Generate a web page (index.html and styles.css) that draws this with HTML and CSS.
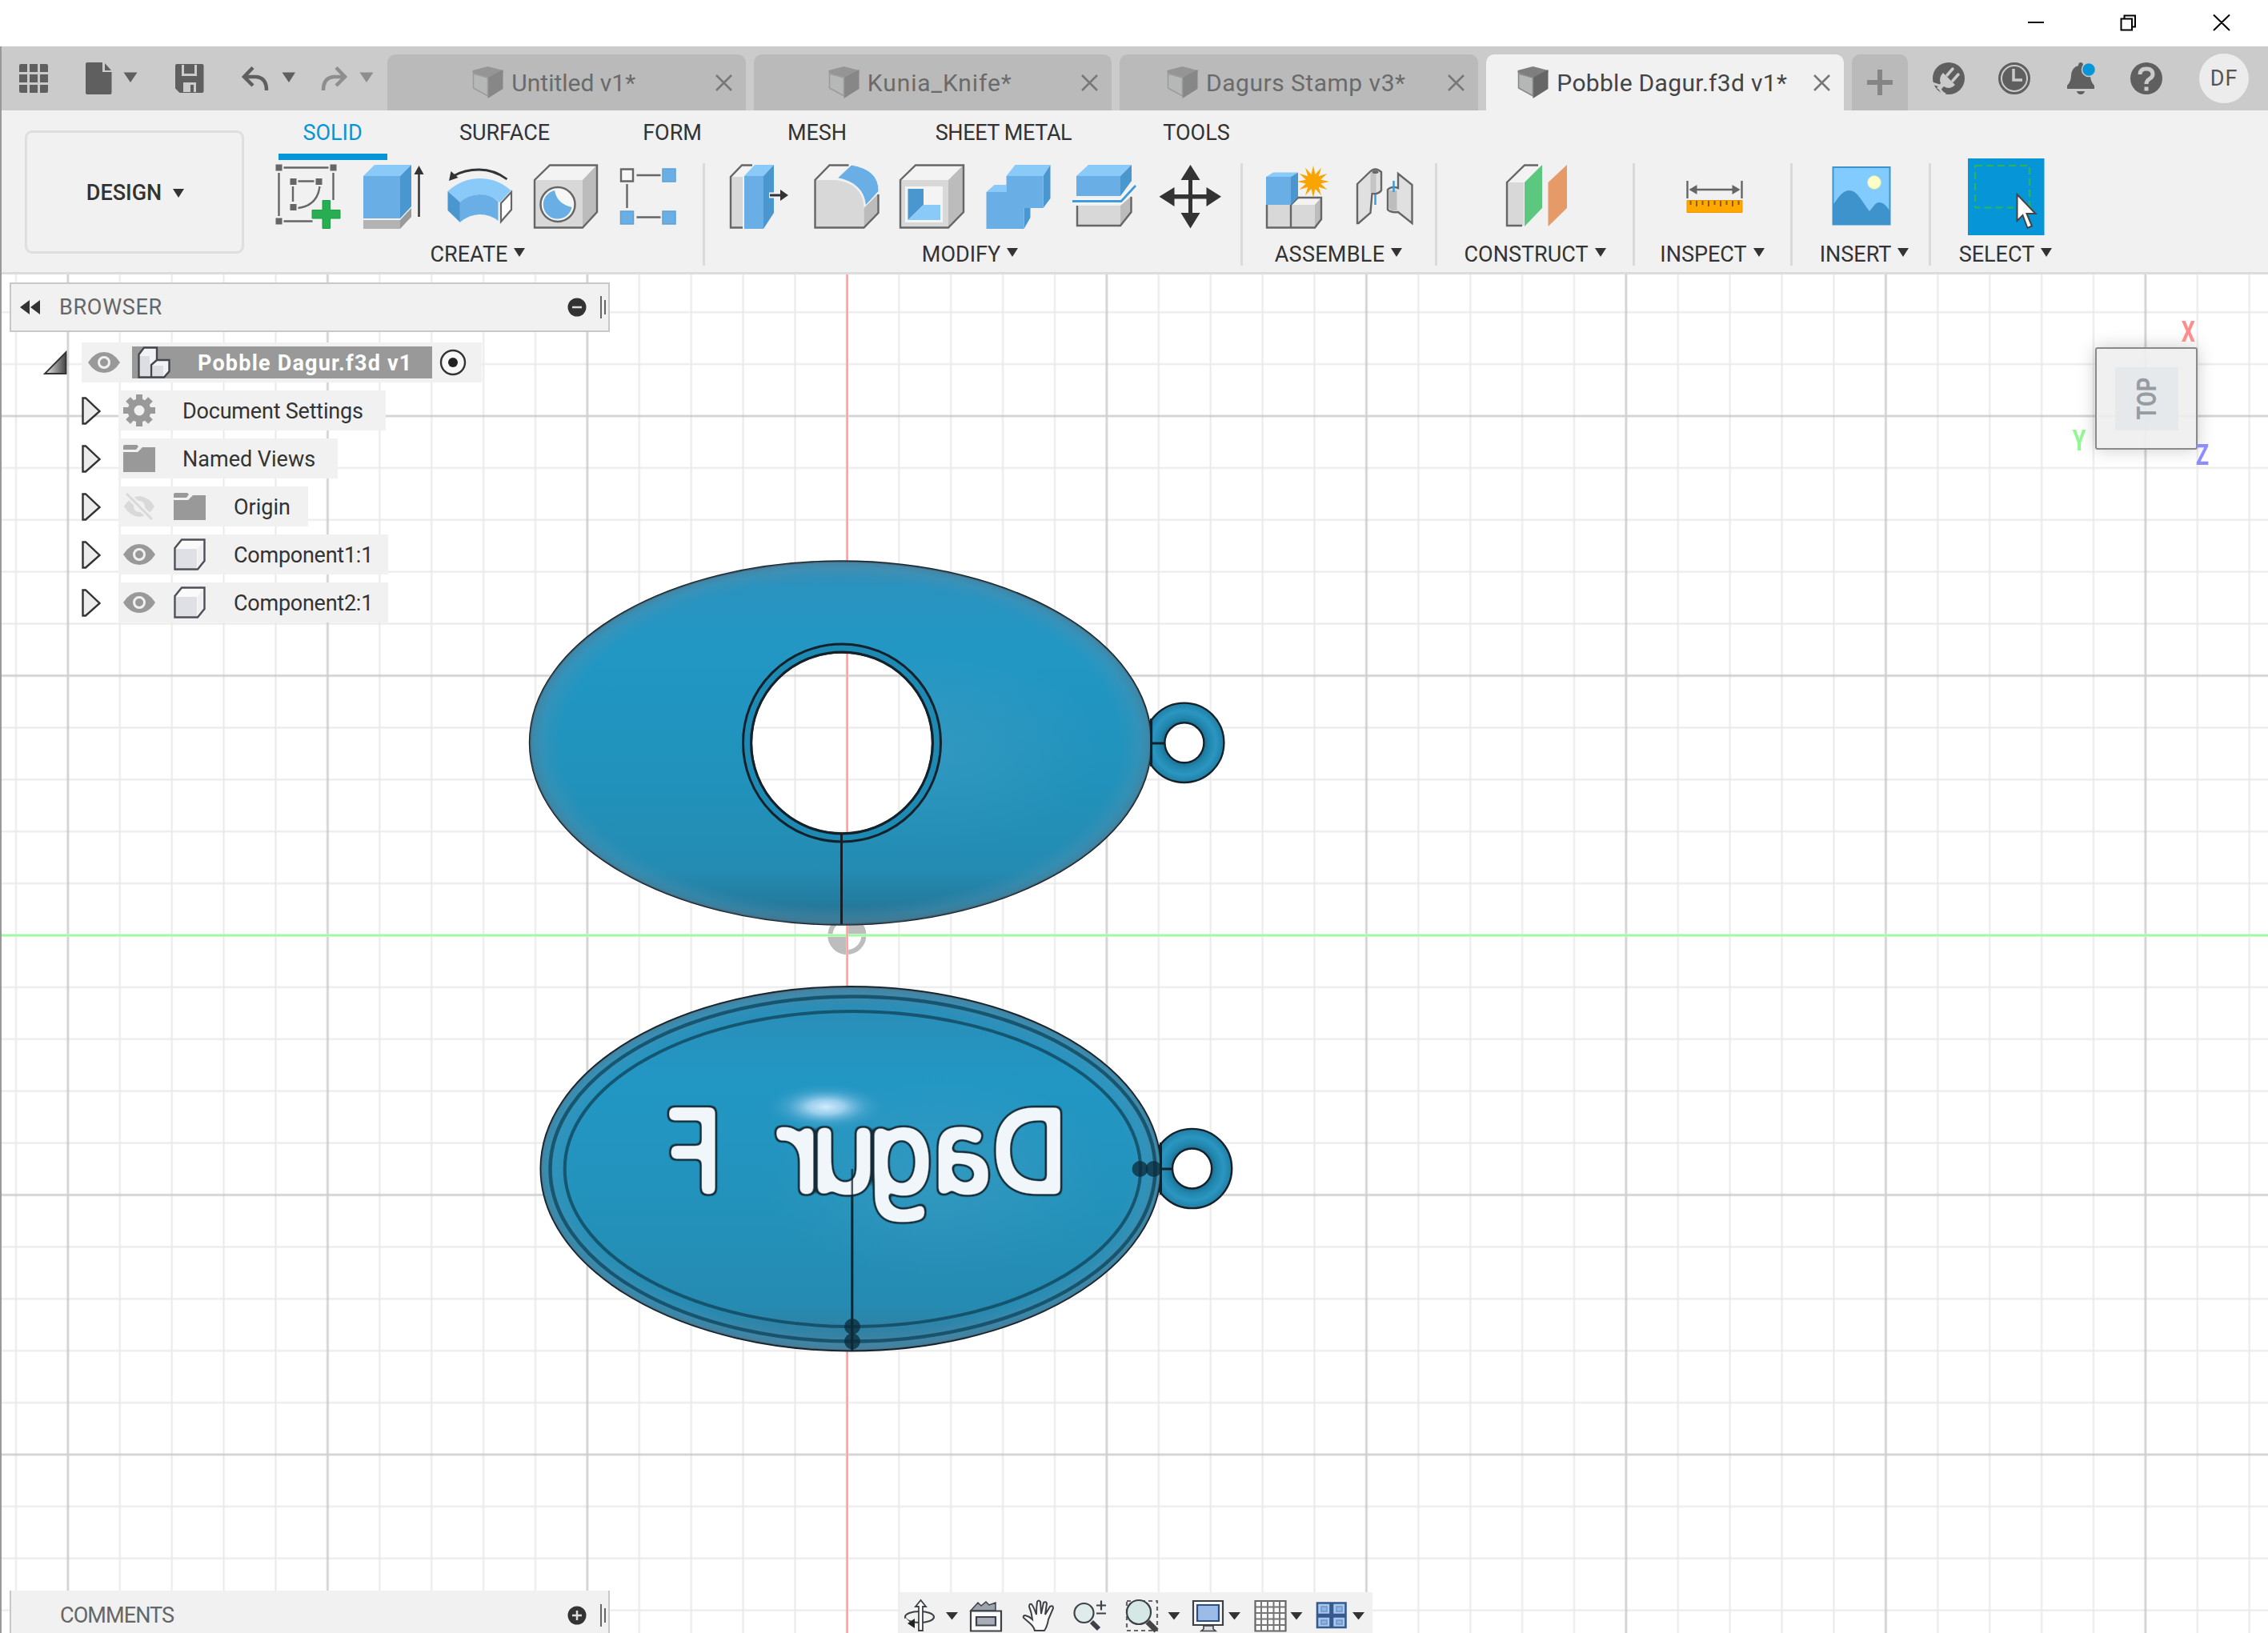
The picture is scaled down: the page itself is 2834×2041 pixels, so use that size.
FILE: index.html
```html
<!DOCTYPE html>
<html lang="en">
<head>
<meta charset="utf-8">
<title>Pobble Dagur.f3d v1</title>
<link rel="stylesheet" href="styles.css">
</head>
<body>
<svg width="0" height="0" class="defs">
  <symbol id="cube" viewBox="0 0 40 40"><path class="c-top" d="M20 0L39 5V8L20 14L1 8V5Z"/><path class="c-right" d="M20 14L39 4V28L20 40Z"/><path class="c-left" d="M2 9L20 14V37L2 27Z"/></symbol>
  <symbol id="eye" viewBox="0 0 40 26"><path fill="#999" d="M0 13Q8 0 20 0T40 13Q32 26 20 26T0 13Z"/><circle cx="20" cy="13" r="6.500" fill="#999" stroke="#f1f1f1" stroke-width="3"/></symbol>
  <symbol id="folder" viewBox="0 0 40 34"><path fill="#999" d="M0 2Q0 0 2 0H17L19 2L16 6H0ZM0 9H18L24 3H40V34H0Z"/></symbol>
  <symbol id="comp" viewBox="0 0 40 40"><path d="M1.500 12L9 1.500H38.500V28L30 38.500H1.500Z" fill="#fafafb"/><path d="M3 13H29V37H3Z" fill="#dfe0e6"/><path d="M30 12L38 3V28L30 37Z" fill="#f0f0f3"/><path d="M1.500 12L10 1.500H38.500V28L30 38.500H1.500Z" fill="none" stroke="#4d4f57" stroke-width="2.400"/></symbol>
  <symbol id="twist" viewBox="0 0 24 35"><path d="M1.500 1.500H5L22.500 18L5 33.500H1.500Z" fill="#ececec" stroke="#333" stroke-width="2.400"/></symbol>
</svg>

<header class="titlebar">
  <svg viewBox="2480 0 354 58" width="354" height="58" fill="none" stroke="#000" stroke-width="2">
    <path d="M2534 28H2554M2650.500 23.500H2664V37.500H2650.500ZM2654.500 23V19.500H2668V33.500H2664M2766 18.500L2786 38M2786 18.500L2766 38"/>
  </svg>
</header>

<div class="app">
<nav class="tabbar">
  <svg class="quick" viewBox="2 58 482 80" width="482" height="80" fill="#5f5f5f">
    <path d="M24 82q0-2 2-2h8v10H24ZM37 80h10v10H37ZM50 80h8q2 0 2 2v8H50ZM24 93h10v10H24ZM37 93h10v10H37ZM50 93h10v10H50ZM24 106h10v10h-8q-2 0-2-2ZM37 106h10v10H37ZM50 106h10v8q0 2-2 2h-8Z"/>
    <path d="M107 80q0-2 2-2h19v12h11.500v26q0 2-2 2h-28.500q-2 0-2-2ZM131 79L139 88H131Z"/>
    <path d="M154.500 90.500H171.500L163 103Z"/>
    <path fill-rule="evenodd" d="M219 82q0-2 2-2h31.500q2 0 2 2v32q0 2-2 2h-28l-5.500-5.500ZM227 81v14h19V81h-3v11h-13V81ZM229 115v-12h16v12h-3v-9h-4v9Z"/>
    <g fill="none" stroke="#5f5f5f" stroke-width="4.500"><path d="M316 84.500L305 96L316 107M306 96H320Q333 97 333 113"/></g>
    <path d="M352.500 90.500H369L361 103Z"/>
    <g fill="none" stroke="#8e8e8e" stroke-width="4.500"><path d="M420 84.500L431 96L420 107M430 96H417Q404 97 404 113"/></g>
    <path fill="#8e8e8e" d="M449.500 90.500H466.500L458 103Z"/>
  </svg>
  <div class="tabs">
    <div class="tab"><div class="tab-title"><svg class="cube dim" width="41" height="40"><use href="#cube"/></svg><span class="t1">Untitled v1*</span></div><svg class="x" width="21" height="21" viewBox="0 0 21 21"><path d="M1 1L20 20M20 1L1 20"/></svg></div>
    <div class="tab"><div class="tab-title"><svg class="cube dim" width="41" height="40"><use href="#cube"/></svg><span class="t2">Kunia_Knife*</span></div><svg class="x" width="21" height="21" viewBox="0 0 21 21"><path d="M1 1L20 20M20 1L1 20"/></svg></div>
    <div class="tab"><div class="tab-title"><svg class="cube dim" width="41" height="40"><use href="#cube"/></svg><span class="t3">Dagurs Stamp v3*</span></div><svg class="x" width="21" height="21" viewBox="0 0 21 21"><path d="M1 1L20 20M20 1L1 20"/></svg></div>
    <div class="tab active"><div class="tab-title"><svg class="cube" width="41" height="40"><use href="#cube"/></svg><span class="t4">Pobble Dagur.f3d v1*</span></div><svg class="x" width="21" height="21" viewBox="0 0 21 21"><path d="M1 1L20 20M20 1L1 20"/></svg></div>
    <div class="newtab"><svg width="34" height="34" viewBox="0 0 34 34"><path d="M17 1V33M1 17H33" stroke="#858585" stroke-width="6"/></svg></div>
  </div>
  <svg viewBox="2385 58 363 80" width="363" height="80" fill="#5f5f5f">
    <circle cx="2435" cy="98" r="20"/>
    <path fill="none" stroke="#cbcbcb" stroke-width="3" d="M2414 104L2424 107Q2423 114 2431 118"/>
    <path fill="#cbcbcb" d="M2428 91L2443 106Q2436 113 2429 108L2424 113L2420 110L2425 104Q2422 97 2428 91Z"/>
    <path fill="none" stroke="#cbcbcb" stroke-width="3.500" stroke-linecap="round" d="M2433 94L2440 86M2440 101L2447 93"/>
    <circle cx="2517" cy="98" r="18.500" fill="none" stroke="#5f5f5f" stroke-width="3"/><circle cx="2517" cy="98" r="15"/>
    <path fill="none" stroke="#cbcbcb" stroke-width="3.500" d="M2516 86V100H2527"/>
    <path d="M2583 111V107Q2588 102 2588 94Q2589 84 2597 82Q2597 78 2600 78T2603 82Q2611 84 2612 94Q2612 102 2617 107V111ZM2595 114H2605Q2604 118 2600 118T2595 114Z"/>
    <circle cx="2610" cy="87" r="8.500" fill="#0696d7" stroke="#cbcbcb" stroke-width="1.500"/>
    <circle cx="2682" cy="98" r="20"/>
    <path fill="none" stroke="#cbcbcb" stroke-width="5" d="M2674 93Q2674 86 2682 86T2690 93Q2690 96 2686 98.500T2682 105M2682 108.500V113.500"/>
  </svg>
  <div class="avatar">DF</div>
</nav>

<section class="ribbon">
  <button class="design"><span>DESIGN</span><i class="caret"></i></button>
  <div class="ribbon-main">
    <div class="ribbon-tabs"><span class="on">SOLID</span><span>SURFACE</span><span>FORM</span><span>MESH</span><span class="sm">SHEET METAL</span><span>TOOLS</span></div>
    <div class="groups">
      <div class="group g1">
        <div class="tools">
          <svg viewBox="330.500 198 107.500 96" width="107.500" height="96">
            <path class="ln" d="M354 209.500H410M348 216V270M416 216V250M354 276.500H390M372 226.500H392M365.500 233V252M399 233Q396 257 372 260"/>
            <path fill="#666" d="M344 205.500h8v8h-8ZM412 205.500h8v8h-8ZM344 272.500h8v8h-8ZM362 223h8v8h-8ZM394 223h8v8h-8ZM362 255h8v8h-8Z"/>
            <path fill="#27ae53" stroke="#1e9e48" d="M402.500 250.500H412V262.500H424.500V273H412V285.500H402.500V273H389.500V262.500H402.500Z"/>
          </svg>
          <svg viewBox="438 198 107.500 96" width="107.500" height="96">
            <path class="bf" d="M454 220H500V273H454Z"/><path class="bt" d="M454 220L468 206H514L500 220Z"/><path class="bs" d="M500 220L514 206V258L500 273Z"/>
            <path fill="#b3b3b3" d="M454 275H500V286H454Z"/><path fill="#9a9a9a" d="M500 275L514 260V271L500 286Z"/>
            <path stroke="#333" stroke-width="2.500" d="M523.500 216V271"/><path fill="#333" d="M523.500 207L529.500 218H517.500Z"/>
          </svg>
          <svg viewBox="545.500 198 107.500 96" width="107.500" height="96">
            <path class="bt" d="M559 239Q577 223 599 223T638 238L624 253Q612 243 599 243T574 253Z"/><path class="bs" d="M559 239L574.500 253V278L559 263Z"/><path class="bf" d="M574 253Q585 243 599 243T622 252V276Q612 268 599 268T574 278Z"/>
            <path d="M625.500 254L638.500 240V262L625.500 277Z" fill="#fff" stroke="#666" stroke-width="2.200"/>
            <path fill="none" stroke="#333" stroke-width="2.800" d="M633 224Q617 212 598 212Q580 212 566 220"/><path fill="#333" d="M560.500 226L563 214L572 222Z"/>
          </svg>
          <svg viewBox="653 198 107.500 96" width="107.500" height="96">
            <path class="gf" d="M668 225H728V285H668Z"/><path class="gt" d="M668 225L687 206H746L728 225Z"/><path class="gs" d="M728 225L746 206V265L728 285Z"/><path class="ln" d="M668 225L687 206.500H746V265L728 284.500H668Z"/>
            <circle cx="697" cy="255.500" r="21.500" fill="#f6f6f6" stroke="#666" stroke-width="2.500"/><path class="bf" d="M693 238A18 18 0 1 0 714.500 259Q696 255 693 238Z"/>
          </svg>
          <svg viewBox="760.500 198 107.500 96" width="107.500" height="96">
            <path class="ln" d="M795 219H825M783 230V260M795 271.500H825"/><path d="M775.500 211.500h15v15h-15Z" fill="#f6f6f6" stroke="#666" stroke-width="2.400"/>
            <path fill="#69afe5" stroke="#5fa1d4" stroke-width="1.500" d="M827.500 211h16v16h-16ZM775 264h16v16h-16ZM827.500 264h16v16h-16Z"/>
          </svg>
        </div>
        <div class="label">CREATE<i class="caret"></i></div>
      </div>
      <div class="group g2">
        <div class="tools">
          <svg viewBox="895 198 107.500 96" width="107.500" height="96">
            <path class="gt" d="M913 221L928 206H940L929 221Z"/><path class="gf" d="M913 221H928V285H913Z"/><path class="ln" d="M940 206.500H927L913 221V284.500H928"/>
            <path class="bf" d="M930 220H954V286H930Z"/><path class="bt" d="M930 220L943 206H967L954 220Z"/><path class="bs" d="M954 220L967 206V266L954 286Z"/>
            <path stroke="#f1f1f1" stroke-width="7" d="M961 244H976"/><path stroke="#333" stroke-width="3" d="M962 244H977"/><path fill="#333" d="M975 237L985 244L975 251Z"/>
          </svg>
          <svg viewBox="1002.500 198 107.500 96" width="107.500" height="96">
            <path class="gt" d="M1018 225L1036 206H1062L1044 225Z"/><path class="gf" d="M1018 225H1044Q1078 230 1079 259V285H1018Z"/><path class="gs" d="M1079 260L1097 242V266L1079 285Z"/>
            <path class="ln" d="M1060 206.500H1036L1018 225V284.500H1079L1097 266V243"/><path class="bf" stroke="#f1f1f1" stroke-width="1" d="M1046 222.500L1063.500 206Q1098 212 1097.500 239L1081 257Q1079 229 1046 222.500Z"/>
          </svg>
          <svg viewBox="1110 198 107.500 96" width="107.500" height="96">
            <path class="gf" d="M1125 225H1185V285H1125Z"/><path class="gt" d="M1125 225L1144 206H1204L1185 225Z"/><path class="gs" d="M1185 225L1204 206V265L1185 285Z"/><path class="ln" d="M1125 225L1144 206.500H1204V265L1185 284.500H1125Z"/>
            <path fill="#f4f4f4" d="M1131 233H1178V278H1131Z"/><path class="bs" d="M1134.500 236H1154V256L1134.500 275Z"/><path class="bt" d="M1154 256H1175V275H1134.500Z"/>
          </svg>
          <svg viewBox="1217.500 198 107.500 96" width="107.500" height="96">
            <path class="bt" d="M1257 220L1268 206H1312L1303 220ZM1232 240L1242 231H1257V240Z"/><path class="bs" d="M1303 220L1312 206V248L1303 260ZM1279 260H1287V272L1279 286Z"/><path class="bf" d="M1232 240H1257V220H1303V260H1279V286H1232Z"/>
          </svg>
          <svg viewBox="1325 198 107.500 96" width="107.500" height="96">
            <path class="bf" d="M1345 220H1400V245H1345Z"/><path class="bt" d="M1345 220L1360 206H1414L1400 220Z"/><path class="bs" d="M1400 220L1414 206V226L1400 245Z"/>
            <path class="gf" d="M1345 257H1400V282H1345Z"/><path class="gs" d="M1400 257L1414 245V265L1400 282Z"/><path class="ln" d="M1346 257V282H1400L1413.500 265V246"/>
            <path fill="none" stroke="#f8f8f8" stroke-width="6" d="M1340 251.500H1401L1419 232"/><path fill="none" stroke="#3d9be0" stroke-width="2.800" d="M1340 251.500H1401L1419 232"/>
          </svg>
          <svg viewBox="1432.500 198 107.500 96" width="107.500" height="96">
            <path fill="#333" d="M1487 206L1499 225H1489.500V243H1507V234L1525.500 245.700L1507 258V248.500H1489.500V266H1499L1487 285.500L1475 266H1484.500V248.500H1467V258L1448 245.700L1467 234V243H1484.500V225H1475Z"/>
          </svg>
        </div>
        <div class="label">MODIFY<i class="caret"></i></div>
      </div>
      <div class="group g3">
        <div class="tools">
          <svg viewBox="1568 198 107.500 96" width="107.500" height="96">
            <path class="gf" d="M1582 256H1643V285H1582Z"/><path class="gt" d="M1613 256L1622 247H1651L1643 256Z"/><path class="gs" d="M1643 256L1651 247V274L1643 285Z"/><path class="ln" d="M1583 256V284.500H1643L1651 274V247H1622L1613 256V284"/>
            <path class="bf" d="M1582 221H1613V256H1582Z"/><path class="bt" d="M1582 221L1591 215.500H1622L1613 221Z"/><path class="bs" d="M1613 221L1622 215.500V246L1613 256Z"/>
            <g transform="translate(1641 227)" fill="#f9a400"><circle r="15" fill="#f1f1f1"/><circle r="9.500"/><path id="ray" d="M0-20L4.500 0L0 20L-4.500 0Z"/><use href="#ray" transform="rotate(30)"/><use href="#ray" transform="rotate(60)"/><use href="#ray" transform="rotate(90)"/><use href="#ray" transform="rotate(120)"/><use href="#ray" transform="rotate(150)"/></g>
          </svg>
          <svg viewBox="1675.500 198 107.500 96" width="107.500" height="96">
            <path d="M1695.500 230L1711 215Q1718 208 1725.500 215V238Q1722 243 1714 242L1712 266L1697 279H1695.500Z" fill="#e0e0e0" stroke="#666" stroke-width="2.400"/><path fill="#c4c4c4" d="M1712 216V240Q1717 242 1719 240V217Z"/><ellipse cx="1718" cy="215" rx="4" ry="2" fill="#666"/>
            <path d="M1746.500 217L1764 231V279L1746.500 265Q1737 266 1733.500 262V237Q1738 232 1746.500 235Z" fill="#e0e0e0" stroke="#666" stroke-width="2.400"/><path fill="#bdbdbd" d="M1735 238H1745V263H1738L1735 260Z"/><path stroke="#3d9be0" stroke-width="2.500" d="M1718 243V256M1741 226V240"/>
          </svg>
        </div>
        <div class="label">ASSEMBLE<i class="caret"></i></div>
      </div>
      <div class="group g4">
        <div class="tools">
          <svg viewBox="1865 198 107.500 96" width="107.500" height="96">
            <path class="gt" d="M1883 228L1905 206H1926L1904 228Z"/><path class="gf" d="M1883 228H1904V282H1883Z"/><path class="ln" d="M1922 206.500H1905L1883 228V282H1902"/>
            <path fill="#5cc77f" d="M1905 228L1927 206V260L1905 283Z"/><path fill="#e59a68" d="M1934.500 228L1958 206V260L1934.500 283Z"/>
          </svg>
        </div>
        <div class="label">CONSTRUCT<i class="caret"></i></div>
      </div>
      <div class="group g5">
        <div class="tools">
          <svg viewBox="2088.500 198 107.500 96" width="107.500" height="96">
            <path class="ln" d="M2108 226V248M2176 226V248M2112 237H2172"/><path fill="#666" d="M2110 237L2120 231V243ZM2174 237L2164 231V243Z"/>
            <path fill="#ffa800" stroke="#e89600" d="M2107.500 250.500H2176.500V265.500H2107.500Z"/><path stroke="#8a5c00" stroke-width="2" d="M2112 251V256M2119.500 251V258M2127 251V256M2134.500 251V258M2142 251V256M2149.500 251V258M2157 251V256M2164.500 251V258M2172 251V256"/>
          </svg>
        </div>
        <div class="label">INSPECT<i class="caret"></i></div>
      </div>
      <div class="group g6">
        <div class="tools">
          <svg viewBox="2272 198 107.500 96" width="107.500" height="96">
            <path fill="#82cbff" d="M2290 208.500H2362V281H2290Z"/><path fill="#3f93cc" d="M2290 257C2298 245 2303 238 2311 238C2321 238 2328 254 2336 264C2341 259 2343 253 2348 253C2354 253 2358 258 2362 265V281H2290Z"/>
            <circle cx="2342" cy="228" r="8.500" fill="#ffffc8" stroke="#bfe0c8"/><path fill="none" stroke="#3f93cc" stroke-width="2" d="M2290.500 209H2361.500V280.500H2290.500Z"/>
          </svg>
        </div>
        <div class="label">INSERT<i class="caret"></i></div>
      </div>
      <div class="group g7">
        <div class="tools">
          <svg viewBox="2453 198 107.500 96" width="107.500" height="96">
            <path fill="#0696d7" d="M2459 198H2554.500V294H2459Z"/><path fill="none" stroke="#2cb45a" stroke-width="2.200" stroke-dasharray="9 5" d="M2468 207H2536V259.500H2468Z"/>
            <path fill="#fff" stroke="#444" stroke-width="2" d="M2520.500 243V276L2527.500 269L2533.500 285L2539 282.500L2532.500 267H2543.500Z"/>
          </svg>
        </div>
        <div class="label">SELECT<i class="caret"></i></div>
      </div>
    </div>
  </div>
</section>

<main class="viewport">
  <svg class="scene" viewBox="2 343 2832 1698" width="2832" height="1698">
    <defs>
      <pattern id="minor" patternUnits="userSpaceOnUse" x="1056.900" y="1167.500" width="64.900" height="64.900"><path d="M1.500 0V64.900M0 1.500H64.900" stroke="#000" stroke-opacity=".085" stroke-width="2"/></pattern>
      <pattern id="major" patternUnits="userSpaceOnUse" x="1056.400" y="1167" width="324.500" height="324.500"><path d="M2 0V324.500M0 2H324.500" stroke="#000" stroke-opacity=".11" stroke-width="3"/></pattern>
      <linearGradient id="body" x1="0" y1="0" x2="0" y2="1"><stop offset="0" stop-color="#3b8cb2"/><stop offset=".07" stop-color="#2a93bf"/><stop offset=".25" stop-color="#2297c4"/><stop offset=".6" stop-color="#2092bb"/><stop offset=".85" stop-color="#258bb2"/><stop offset=".94" stop-color="#237c9f"/><stop offset="1" stop-color="#316b84"/></linearGradient>
      <linearGradient id="body2" x1="0" y1="0" x2="0" y2="1"><stop offset="0" stop-color="#3d83a4"/><stop offset=".06" stop-color="#2a8eb8"/><stop offset=".25" stop-color="#2297c4"/><stop offset=".6" stop-color="#2292bb"/><stop offset=".88" stop-color="#268ab1"/><stop offset="1" stop-color="#3a7b9a"/></linearGradient>
      <radialGradient id="sheen" cx=".64" cy=".52" r=".28"><stop offset="0" stop-color="#5aa3c6" stop-opacity=".3"/><stop offset=".5" stop-color="#5aa3c6" stop-opacity=".16"/><stop offset="1" stop-color="#5aa3c6" stop-opacity="0"/></radialGradient>
      <radialGradient id="rim"><stop offset=".9" stop-color="#4a90b2" stop-opacity="0"/><stop offset=".96" stop-color="#4a90b2" stop-opacity=".4"/><stop offset="1" stop-color="#507c92" stop-opacity=".65"/></radialGradient>
      <radialGradient id="torus"><stop offset=".5" stop-color="#1d6f90"/><stop offset=".62" stop-color="#2086ad"/><stop offset=".8" stop-color="#2b96c1"/><stop offset="1" stop-color="#1f7fa5"/></radialGradient>
      <radialGradient id="spot"><stop offset="0" stop-color="#d3ecff"/><stop offset=".3" stop-color="#aed8f4" stop-opacity=".85"/><stop offset=".65" stop-color="#6db5dc" stop-opacity=".35"/><stop offset="1" stop-color="#2f98c5" stop-opacity="0"/></radialGradient>
      <filter id="emboss" color-interpolation-filters="sRGB" x="-10%" y="-20%" width="120%" height="150%">
        <feMorphology in="SourceAlpha" operator="dilate" radius="2" result="fat"/>
        <feGaussianBlur in="fat" stdDeviation="3.500" result="soft"/>
        <feComponentTransfer in="soft" result="shape"><feFuncA type="linear" slope="7" intercept="-2.700"/></feComponentTransfer>
        <feComponentTransfer in="soft" result="outer"><feFuncA type="linear" slope="7" intercept="-1"/></feComponentTransfer>
        <feFlood flood-color="#142c38"/><feComposite in2="outer" operator="in" result="edge"/>
        <feFlood flood-color="#f0f6fa"/><feComposite in2="shape" operator="in" result="fill"/>
        <feMerge><feMergeNode in="edge"/><feMergeNode in="fill"/></feMerge>
      </filter>
    </defs>
    <rect x="2" y="343" width="2832" height="1698" fill="url(#minor)"/>
    <rect x="2" y="343" width="2832" height="1698" fill="url(#major)"/>
    <g fill="none"><circle cx="1058.400" cy="1169" r="21" stroke="#bdbdbd" stroke-width="6"/><path fill="#bdbdbd" d="M1058.400 1169V1193A24 24 0 0 1 1034.400 1169ZM1058.400 1169V1145A24 24 0 0 1 1082.400 1169Z"/></g>
    <path d="M2 1169H2834" stroke="#fff" stroke-width="3.500"/><path d="M2 1169H2834" stroke="#a4f7a4" stroke-width="3"/>
    <path d="M1058.500 343V2041" stroke="#fff" stroke-width="3"/><path d="M1058.500 343V2041" stroke="#ff8a8a" stroke-width="2"/>

    <g stroke="#15212a" stroke-width="2.400">
      <path fill="url(#torus)" fill-rule="evenodd" d="M1430 928.300A49.700 49.700 0 1 0 1529.400 928.300A49.700 49.700 0 1 0 1430 928.300ZM1455.400 928.300A24.500 25 0 1 0 1504.400 928.300A24.500 25 0 1 0 1455.400 928.300Z"/>
      <path d="M1438 929H1455" stroke-width="3"/>
      <path fill="url(#body)" fill-rule="evenodd" d="M662 928.300C662 802 836 701.500 1050.500 701.500S1438.500 802 1438.500 928.300S1265 1155.500 1050.500 1155.500S662 1054 662 928.300ZM939 928.500A113 113 0 1 0 1165 928.500A113 113 0 1 0 939 928.500Z"/>
      <path stroke="none" fill="url(#sheen)" fill-rule="evenodd" d="M662 928.300C662 802 836 701.500 1050.500 701.500S1438.500 802 1438.500 928.300S1265 1155.500 1050.500 1155.500S662 1054 662 928.300ZM939 928.500A113 113 0 1 0 1165 928.500A113 113 0 1 0 939 928.500Z"/>
      <path stroke="none" fill="url(#rim)" fill-rule="evenodd" d="M662 928.300C662 802 836 701.500 1050.500 701.500S1438.500 802 1438.500 928.300S1265 1155.500 1050.500 1155.500S662 1054 662 928.300ZM939 928.500A113 113 0 1 0 1165 928.500A113 113 0 1 0 939 928.500Z"/>
      <circle cx="1052" cy="928.500" r="118.500" fill="none" stroke="#1d8ab3" stroke-width="9"/>
      <circle cx="1052" cy="928.500" r="123.500" fill="none" stroke-width="3"/><circle cx="1052" cy="928.500" r="113.500" fill="none" stroke-width="3"/>
      <path d="M1051.500 1042V1155" stroke-width="3"/><path d="M1438.600 898V958" stroke-width="3"/>
    </g>

    <g stroke="#15212a" stroke-width="2.400">
      <path fill="url(#torus)" fill-rule="evenodd" d="M1440 1460.500A49.600 49.600 0 1 0 1539.200 1460.500A49.600 49.600 0 1 0 1440 1460.500ZM1465 1460.500A24.600 25 0 1 0 1514.200 1460.500A24.600 25 0 1 0 1465 1460.500Z"/>
      <path d="M1450 1461H1465" stroke-width="3"/>
      <ellipse cx="1063" cy="1460.700" rx="387.300" ry="227.500" fill="url(#body2)"/>
      <ellipse cx="1063" cy="1460.700" rx="387" ry="227" fill="url(#sheen)" stroke="none"/>
      <ellipse cx="1063" cy="1460.700" rx="387" ry="227" fill="url(#rim)" stroke="none"/>
      <ellipse cx="1065.500" cy="1461" rx="378" ry="215.500" fill="none" stroke="#0f4257" stroke-opacity=".75" stroke-width="4.500"/>
      <ellipse cx="1065.400" cy="1461" rx="359.700" ry="197" fill="none" stroke="#0f4257" stroke-opacity=".75" stroke-width="4"/>
      <ellipse cx="1032" cy="1383.500" rx="76" ry="30" fill="url(#spot)" stroke="none"/>
      <path d="M1450.500 1428V1493" stroke-width="3"/>
    </g>
    <g filter="url(#emboss)"><g class="engraving" transform="translate(1326.500 1490) scale(-.88 .96)"><text x="-10 100 183 263 343 410 480" y="0">Dagur F</text></g></g>
    <path d="M1064.800 1494V1689" stroke="#10242e" stroke-width="3"/><path d="M1064.800 1461V1494" stroke="#10242e" stroke-width="2.500" stroke-opacity=".75"/>
    <g fill="#0b2a38" fill-opacity=".75"><circle cx="1065" cy="1658" r="10"/><circle cx="1065" cy="1676.500" r="10"/><circle cx="1424.500" cy="1461" r="10"/><circle cx="1441.500" cy="1461" r="10"/></g>
  </svg>

  <div class="viewcube">
    <div class="cube-face"><div class="cube-mid"><span>TOP</span></div></div>
    <b class="ax x-ax">X</b><b class="ax y-ax">Y</b><b class="ax z-ax">Z</b>
  </div>

  <aside class="browser">
    <div class="panel-head">
      <svg width="26" height="18" viewBox="0 0 26 18"><path fill="#333" d="M12 0V18L0 9ZM25 0V18L13 9Z"/></svg>
      <span class="panel-name b">BROWSER</span>
      <svg class="grip" width="48" height="30" viewBox="0 0 48 30"><circle cx="12" cy="15" r="11.500" fill="#333"/><path d="M6 15H18" stroke="#ddd" stroke-width="2.500"/><path d="M42 1V29M47 6V24" stroke="#666" stroke-width="2"/></svg>
    </div>
    <div class="tree">
      <div class="row root"><svg class="tw" width="30" height="30" viewBox="0 0 30 30"><defs><linearGradient id="tg"><stop offset="0" stop-color="#eee"/><stop offset="1" stop-color="#444"/></linearGradient></defs><path d="M2 29H28.500V2Z" fill="url(#tg)" stroke="#333" stroke-width="1.800"/></svg>
        <div class="item"><svg class="eye" width="40" height="26"><use href="#eye"/></svg>
          <div class="sel"><svg width="41" height="40" viewBox="0 0 41 40"><path d="M1.500 10L8 1.500H23V17H40V30L33 38.500H1.500Z" fill="#f3f3f6"/><path d="M3 12H15V37H3ZM18 24H32V37H18Z" fill="#dcdee4"/><path d="M1.500 10L8 1.500H24V17H39.500V31L33 38.500H1.500ZM17 38V23L24 17" fill="none" stroke="#44464e" stroke-width="2.400"/></svg><span>Pobble Dagur.f3d v1</span></div>
          <svg width="34" height="34" viewBox="0 0 34 34"><circle cx="17" cy="17" r="15" fill="#f8f8f8" stroke="#333" stroke-width="2.400"/><circle cx="17" cy="17" r="6" fill="#222"/></svg></div></div>
      <div class="row"><svg class="tw" width="24" height="35"><use href="#twist"/></svg><div class="item w2"><svg width="40" height="40" viewBox="-20 -20 40 40"><circle r="10.500" fill="none" stroke="#999" stroke-width="8"/><path d="M0-20V-12M0 20V12M-20 0H-12M20 0H12M-14-14L-9-9M14 14L9 9M-14 14L-9 9M14-14L9-9" stroke="#999" stroke-width="8"/></svg><span class="n2">Document Settings</span></div></div>
      <div class="row"><svg class="tw" width="24" height="35"><use href="#twist"/></svg><div class="item w3"><svg width="40" height="34"><use href="#folder"/></svg><span class="n3">Named Views</span></div></div>
      <div class="row"><svg class="tw" width="24" height="35"><use href="#twist"/></svg><div class="item w4"><svg width="40" height="34" viewBox="0 0 40 34"><path fill="#d9d9d9" d="M1 17Q8 5 20 4Q32 5 39 17Q32 29 20 30Q8 29 1 17Z"/><circle cx="20" cy="17" r="7" fill="#f1f1f1"/><path d="M3 0L37 34" stroke="#f1f1f1" stroke-width="8"/><path d="M4 1L36 33" stroke="#d9d9d9" stroke-width="3"/></svg><svg class="second" width="40" height="34"><use href="#folder"/></svg><span class="n4">Origin</span></div></div>
      <div class="row"><svg class="tw" width="24" height="35"><use href="#twist"/></svg><div class="item w5"><svg width="40" height="26"><use href="#eye"/></svg><svg class="second" width="40" height="40"><use href="#comp"/></svg><span class="n5">Component1:1</span></div></div>
      <div class="row"><svg class="tw" width="24" height="35"><use href="#twist"/></svg><div class="item w5"><svg width="40" height="26"><use href="#eye"/></svg><svg class="second" width="40" height="40"><use href="#comp"/></svg><span class="n5">Component2:1</span></div></div>
    </div>
  </aside>

  <div class="comments"><span class="panel-name c">COMMENTS</span><svg class="grip" width="48" height="30" viewBox="0 0 48 30"><circle cx="12" cy="15" r="11.500" fill="#333"/><path d="M6 15H18M12 9V21" stroke="#ddd" stroke-width="2.500"/><path d="M42 1V29M47 6V24" stroke="#666" stroke-width="2"/></svg></div>

  <div class="navbar">
    <svg viewBox="1124 1990 591 51" width="591" height="51" fill="none" stroke="#3d4248" stroke-width="2.200">
      <ellipse cx="1149" cy="2021" rx="18" ry="7"/><path stroke="#f1f1f1" stroke-width="5" d="M1130 2024L1136 2030"/><path fill="#fff" stroke-width="1.800" d="M1148 2038V2008H1144L1150.500 2000L1157 2008H1153V2038Z"/><path fill="#222" stroke="none" d="M1134 2029L1143 2023V2035Z"/>
      <path fill="#9ea3ab" d="M1213 2013L1222 2003L1226 2007L1232 2002L1236 2006L1244 2003V2013Z" stroke-width="1.500"/><path fill="#fafafa" d="M1213 2013.500H1251V2038.500H1213Z"/><path fill="#a9adb8" d="M1220 2021H1244V2031.500H1220Z"/>
      <path fill="#fafafa" stroke-width="2" d="M1293 2038Q1292 2033 1286 2028L1279 2022Q1278 2019 1281 2019Q1286 2020 1290 2024Q1289 2015 1286 2008Q1286 2004 1289 2005Q1292 2009 1295 2018Q1295 2009 1296 2002Q1298 1999 1300 2002L1301 2017L1304 2003Q1307 2001 1308 2004L1306 2018L1312 2008Q1316 2006 1316 2010L1310 2024Q1309 2032 1305 2038Z"/>
      <circle cx="1354.500" cy="2016" r="12" fill="#dfeceb"/><path stroke-width="6" d="M1364 2027L1373 2036"/><path d="M1370 2006.500H1382M1376 2000.500V2012.500M1370 2016.500H1382"/>
      <path stroke-dasharray="5 4" d="M1408 2001H1446V2038H1408Z" stroke="#666"/><circle cx="1423" cy="2015" r="15" fill="#d5e8e6"/><path stroke-width="7" stroke="#444" d="M1434 2027L1445 2038"/>
      <path fill="#fafafa" d="M1491 2001H1528V2031H1491Z"/><path fill="#9abce6" stroke="#2c4e86" d="M1496 2006H1523V2026H1496Z"/><path fill="#ddd" stroke-width="1.600" d="M1504 2032H1516V2036L1519 2038.500H1501L1504 2036Z"/>
      <path fill="#fafafa" stroke="#666" d="M1568.500 2001H1606.500V2038.500H1568.500Z"/><path stroke="#777" stroke-width="2" d="M1576 2001V2038M1584 2001V2038M1591.500 2001V2038M1599 2001V2038M1569 2008.500H1606M1569 2016H1606M1569 2023.500H1606M1569 2031H1606"/>
      <path fill="#a9c7ec" stroke="#36598f" stroke-width="2.600" d="M1646 2003.500H1662.500V2018H1646ZM1665 2003.500H1681.500V2018H1665ZM1646 2020.500H1662.500V2034H1646ZM1665 2020.500H1681.500V2034H1665Z"/><path fill="#8fb4e2" stroke="#6c95cc" stroke-width="1.500" d="M1651 2008H1658V2014H1651ZM1670 2008H1677V2014H1670ZM1651 2025H1658V2030H1651ZM1670 2025H1677V2030H1670Z"/>
      <path fill="#333" stroke="none" d="M1182 2015H1197L1189.500 2024.500ZM1459.500 2015H1474.500L1467 2024.500ZM1535 2015H1550L1542.500 2024.500ZM1612.500 2015H1627.500L1620 2024.500ZM1690 2015H1705L1697.500 2024.500Z"/>
    </svg>
  </div>
</main>
</div>
</body>
</html>
```
FILE: styles.css
```css
* { box-sizing: border-box; }
body { margin: 0; width: 2834px; height: 2041px; overflow: hidden; display: flex; flex-direction: column; background: #fff; font-family: Roboto, "Liberation Sans", sans-serif; font-size: 27px; color: #333; }
svg { display: block; flex: none; }
.defs { position: absolute; }
.titlebar { height: 58px; display: flex; justify-content: flex-end; flex: none; }
.app { flex: 1; display: flex; flex-direction: column; border-left: 2px solid #999; min-height: 0; }

/* document tabs */
.tabbar { height: 80px; flex: none; display: flex; background: #cbcbcb; }
.tabs { display: flex; align-items: flex-end; gap: 10px; width: 1901px; }
.tab { width: 447.500px; height: 70px; flex: none; display: flex; align-items: center; padding: 0 17px 0 6px; border-radius: 10px 10px 0 0; background: #bababa; color: #6a6a6a; }
.tab.active { background: #f1f1f1; color: #444; }
.tab-title { flex: 1; display: flex; align-items: center; justify-content: center; gap: 9px; font-size: 30px; line-height: 70px; white-space: nowrap; }
.tab-title span { padding-top: 2px; }
.t2 { letter-spacing: .9px; } .t3 { letter-spacing: .5px; } .t4 { letter-spacing: .3px; }
.x { fill: none; stroke: #777; stroke-width: 2.500; }
.c-top { fill: #7e7e7e; } .c-right { fill: #666; } .c-left { fill: #b5b7b7; stroke: #888; stroke-width: 1.500; }
.dim { opacity: .6; }
.newtab { width: 70px; height: 70px; flex: none; border-radius: 10px 10px 0 0; background: #bababa; display: flex; align-items: center; justify-content: center; }
.avatar { width: 62px; height: 62px; margin-top: 9px; border-radius: 50%; background: #ececec; color: #555; text-align: center; line-height: 63px; letter-spacing: 1px; }

/* ribbon */
.ribbon { height: 205px; flex: none; display: flex; background: #f1f1f1; border-bottom: 3px solid #dcdcdc; }
.design { margin: 25px 8px 0 29px; width: 274px; height: 154px; flex: none; display: flex; align-items: center; justify-content: center; gap: 14px; border: 3px solid #dedede; border-radius: 9px; background: #f1f1f1; font: 500 27px Roboto, sans-serif; color: #333; padding: 2px 0 0 2px; }
.caret { display: inline-block; border: 7.500px solid transparent; border-top: 11px solid #333; border-bottom: 0; }
.ribbon-tabs { display: grid; grid-template-columns: 136px 294px 125px 237px 228px 255px; margin-left: 34.500px; height: 60px; }
.ribbon-tabs span { text-align: center; line-height: 57px; height: 62px; white-space: nowrap; }
.ribbon-tabs .sm { letter-spacing: -.4px; padding-left: 1px; }
.ribbon-tabs .on { color: #0696d7; border-bottom: 8px solid #0696d7; }
.groups { display: flex; height: 134px; }
.group { height: 134px; display: flex; flex-direction: column; }
.group:not(.g7) { background: linear-gradient(#dadada, #dadada) right 6px / 3px 128px no-repeat; background-position: right 6px; }
.tools { display: flex; height: 96px; }
.label { display: flex; align-items: center; justify-content: center; gap: 8px; height: 48px; line-height: 49px; }
.label .caret { margin-top: -5px; }
.g1 { width: 568px; } .g1 .tools { padding-left: 17.500px; }
.g2 { width: 672px; } .g2 .tools { padding-left: 14px; } .g2 .label { padding-right: 10px; }
.g3 { width: 243px; } .g3 .tools { padding-left: 15px; } .g3 .label { padding-right: 4px; letter-spacing: .3px; }
.g4 { width: 247px; } .g4 .tools { padding-left: 69px; } .g4 .label { padding-right: 3px; }
.g5 { width: 197px; } .g5 .tools { padding-left: 45.500px; } .g5 .label { padding-right: 4px; }
.g6 { width: 173px; } .g6 .tools { padding-left: 32px; } .g6 .label { padding-left: 6px; }
.g7 { width: 186px; } .g7 .tools { padding-left: 40px; }
.ln { fill: none; stroke: #666; stroke-width: 2.400; }
.bf { fill: #69afe5; } .bt { fill: #8acaf9; } .bs { fill: #4a96cf; }
.gf { fill: #d8d8d8; } .gt { fill: #f3f3f3; } .gs { fill: #bcbcbc; }

/* model space; everything below floats over the canvas */
.viewport { flex: 1; position: relative; min-height: 0; background: #fff; overflow: hidden; }
.engraving text { font: 400 150px "Noto Sans", sans-serif; fill: #f1f6fa; }
.viewcube { position: absolute; left: 2586px; top: 55px; width: 180px; height: 190px; }
.cube-face { position: absolute; left: 30px; top: 36px; width: 128px; height: 128px; display: flex; align-items: center; justify-content: center; background: rgba(238,238,238,.9); border: 2px solid #8a8a8a; border-radius: 3px; box-shadow: 0 0 22px rgba(0,0,0,.2); }
.cube-mid { width: 79px; height: 79px; display: flex; align-items: center; justify-content: center; background: rgba(228,231,234,.8); }
.cube-mid span { transform: rotate(-90deg) scaleX(.8); font: 700 34px "Roboto", sans-serif; color: #969ca1; }
.ax { position: absolute; font: 700 36px/36px Roboto, sans-serif; transform: scaleX(.75); }
.x-ax { left: 135px; top: -1px; color: #ff8d8d; } .y-ax { left: -1px; top: 135px; color: #8ff98f; } .z-ax { left: 153px; top: 153px; color: #8d8dff; }

.browser { position: absolute; left: 10px; top: 10px; width: 750px; }
.panel-head { height: 62px; border: 2.500px solid #c8c8c8; background: #f1f1f1; display: flex; align-items: center; padding-left: 11px; }
.panel-name { color: #666; }
.panel-name.b { margin-left: 23px; letter-spacing: .7px; }
.grip { margin-left: auto; margin-right: 3px; }
.tree { padding-top: 8px; display: flex; flex-direction: column; }
.row { height: 60px; display: flex; align-items: center; padding-left: 90px; }
.root { padding-left: 42px; }
.item { height: 50px; display: flex; align-items: center; background: #f1f1f1; margin-left: 22px; padding-left: 6px; white-space: nowrap; }
.item span { margin-left: 34px; padding-top: 2px; }
.second { margin-left: 23px; }
.n2 { letter-spacing: -.2px; }
.n5 { letter-spacing: -.25px; }
.item .n5, .item .n4 { margin-left: 35px; }
.root .item { width: 500px; margin-left: 18px; padding-left: 8px; }
.sel { width: 375px; height: 40px; margin: 0 9px 0 15px; padding-left: 7px; background: #999; display: flex; align-items: center; font-weight: 700; letter-spacing: 1.200px; color: #fff; }
.w2 { width: 334px; } .w3 { width: 274px; } .w4 { width: 237px; } .w5 { width: 337px; }

.comments { position: absolute; left: 10px; bottom: 0; width: 750px; height: 53px; background: #f1f1f1; border: solid #c8c8c8; border-width: 0 2.500px; display: flex; align-items: center; padding: 8px 0 0 61px; }
.panel-name.c { letter-spacing: -.9px; }
.navbar { position: absolute; left: 1122px; bottom: 0; width: 591px; height: 51px; background: #f1f1f1; }
```
